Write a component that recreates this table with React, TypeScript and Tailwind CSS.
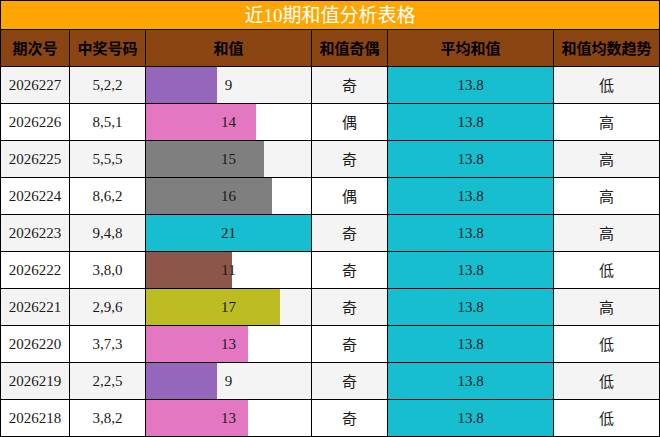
const rows = [
  { issue: "2026227", nums: "5,2,2", sum: 9, color: "#9467bd", parity: "奇", trend: "低" },
  { issue: "2026226", nums: "8,5,1", sum: 14, color: "#e377c2", parity: "偶", trend: "高" },
  { issue: "2026225", nums: "5,5,5", sum: 15, color: "#7f7f7f", parity: "奇", trend: "高" },
  { issue: "2026224", nums: "8,6,2", sum: 16, color: "#7f7f7f", parity: "偶", trend: "高" },
  { issue: "2026223", nums: "9,4,8", sum: 21, color: "#17becf", parity: "奇", trend: "高" },
  { issue: "2026222", nums: "3,8,0", sum: 11, color: "#8c564b", parity: "奇", trend: "低" },
  { issue: "2026221", nums: "2,9,6", sum: 17, color: "#bcbd22", parity: "奇", trend: "高" },
  { issue: "2026220", nums: "3,7,3", sum: 13, color: "#e377c2", parity: "奇", trend: "低" },
  { issue: "2026219", nums: "2,2,5", sum: 9, color: "#9467bd", parity: "奇", trend: "低" },
  { issue: "2026218", nums: "3,8,2", sum: 13, color: "#e377c2", parity: "奇", trend: "低" },
];

const headers = ["期次号", "中奖号码", "和值", "和值奇偶", "平均和值", "和值均数趋势"];
const maxSum = 21;

export default function App() {
  return (
    <div
      className="w-[660px] h-[437px] border border-black bg-white text-[15px] text-[#1a1a1a]"
      style={{ fontFamily: "'Liberation Serif', 'Noto Sans CJK SC', serif" }}
    >
      {/* Title */}
      <div className="h-[29px] border-b border-black bg-[#ffa500] flex items-center justify-center text-white text-[19px] leading-none">
        近10期和值分析表格
      </div>

      <div className="grid grid-cols-[69px_76px_166px_76px_166px_105px]">
        {/* Header */}
        {headers.map((h, i) => (
          <div
            key={h}
            className={
              "h-[37px] border-b border-black bg-[#8b4513] flex items-center justify-center font-bold text-black " +
              (i < headers.length - 1 ? "border-r" : "")
            }
            style={{ fontFamily: "'Noto Sans CJK SC', sans-serif" }}
          >
            {h}
          </div>
        ))}

        {/* Rows */}
        {rows.map((r, idx) => {
          const bg = idx % 2 === 0 ? "#f4f4f4" : "#ffffff";
          const pct = (r.sum / maxSum) * 100;
          const last = idx === rows.length - 1;
          const rowBg = idx % 2 === 0 ? "bg-[#f4f4f4]" : "bg-white";
          const cell =
            "flex items-center justify-center border-r border-black " +
            (last ? "h-[36px]" : "h-[37px] border-b");
          return (
            <div key={r.issue} className="contents">
              <div className={cell + " " + rowBg}>{r.issue}</div>
              <div className={cell + " " + rowBg}>{r.nums}</div>
              <div
                className={cell}
                style={{
                  background: `linear-gradient(to right, ${r.color} 0%, ${r.color} ${pct}%, ${bg} ${pct}%, ${bg} 100%)`,
                }}
              >
                {r.sum}
              </div>
              <div className={cell + " " + rowBg} style={{ fontFamily: "'Noto Sans CJK SC', sans-serif" }}>
                {r.parity}
              </div>
              <div className={cell + " bg-[#17becf]"}>13.8</div>
              <div
                className={
                  "flex items-center justify-center " +
                  rowBg +
                  " " +
                  (last ? "h-[36px]" : "h-[37px] border-b border-black")
                }
                style={{ fontFamily: "'Noto Sans CJK SC', sans-serif" }}
              >
                {r.trend}
              </div>
            </div>
          );
        })}
      </div>
    </div>
  );
}
